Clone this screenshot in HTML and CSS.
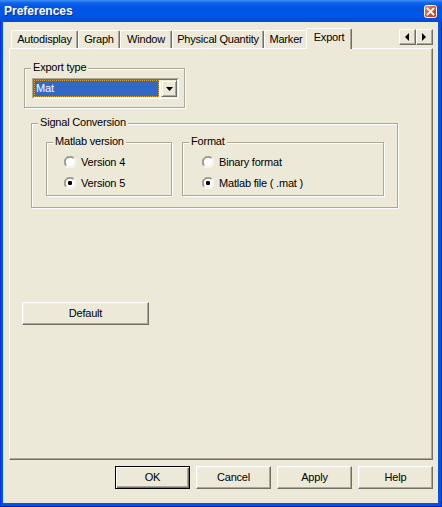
FILE: index.html
```html
<!DOCTYPE html>
<html>
<head>
<meta charset="utf-8">
<title>Preferences</title>
<link rel="stylesheet" href="styles.css">
</head>
<body>
<div class="window">
  <div class="titlebar">
    <span class="title">Preferences</span>
    <span class="close">
      <svg width="13" height="13" viewBox="0 0 13 13">
        <defs>
          <linearGradient id="cg" x1="0" y1="0" x2="1" y2="1">
            <stop offset="0" stop-color="#F0936E"/>
            <stop offset="0.5" stop-color="#E0502C"/>
            <stop offset="1" stop-color="#C03A18"/>
          </linearGradient>
        </defs>
        <rect x="0.5" y="0.5" width="12" height="12" rx="2" fill="url(#cg)" stroke="#fff"/>
        <path d="M3.5 3.5 L9.5 9.5 M9.5 3.5 L3.5 9.5" stroke="#fff" stroke-width="1.8" stroke-linecap="square"/>
      </svg>
    </span>
  </div>
  <div class="client">
    <div class="tabstrip">
      <div class="tabs">
        <div class="tab">Autodisplay</div>
        <div class="tab">Graph</div>
        <div class="tab">Window</div>
        <div class="tab">Physical Quantity</div>
        <div class="tab">Marker</div>
        <div class="tab selected">Export</div>
      </div>
      <div class="scroller">
        <div class="arrow">
          <svg width="5" height="8" viewBox="0 0 5 8"><path d="M4 0 L4 8 L0 4 Z" fill="#000"/></svg>
        </div>
        <div class="arrow">
          <svg width="5" height="8" viewBox="0 0 5 8"><path d="M0 0 L0 8 L4 4 Z" fill="#000"/></svg>
        </div>
      </div>
    </div>
    <div class="panel">
      <div class="group export-group">
        <span class="legend">Export type</span>
        <div class="combo">
          <div class="combo-inner">
            <div class="combo-value"><span class="focus">Mat</span></div>
            <div class="combo-btn">
              <svg width="7" height="4" viewBox="0 0 7 4"><path d="M0 0 L7 0 L3.5 4 Z" fill="#000"/></svg>
            </div>
          </div>
        </div>
      </div>

      <div class="group signal-group">
        <span class="legend">Signal Conversion</span>
        <div class="group sub-group matlab">
          <span class="legend">Matlab version</span>
          <div class="radio-row">
            <svg class="radio" width="12" height="12" viewBox="0 0 12 12">
              <circle cx="6" cy="6" r="5" fill="#fff"/>
              <path d="M10.2 1.8 A5.9 5.9 0 0 0 1.8 10.2" stroke="#ACA899" fill="none"/>
              <path d="M9.5 2.5 A4.9 4.9 0 0 0 2.5 9.5" stroke="#716F64" fill="none"/>
              <path d="M10.2 1.8 A5.9 5.9 0 0 1 1.8 10.2" stroke="#fff" fill="none"/>
              <path d="M9.5 2.5 A4.9 4.9 0 0 1 2.5 9.5" stroke="#F1EFE2" fill="none"/>
            </svg>
            <span>Version 4</span>
          </div>
          <div class="radio-row">
            <svg class="radio" width="12" height="12" viewBox="0 0 12 12">
              <circle cx="6" cy="6" r="5" fill="#fff"/>
              <path d="M10.2 1.8 A5.9 5.9 0 0 0 1.8 10.2" stroke="#ACA899" fill="none"/>
              <path d="M9.5 2.5 A4.9 4.9 0 0 0 2.5 9.5" stroke="#716F64" fill="none"/>
              <path d="M10.2 1.8 A5.9 5.9 0 0 1 1.8 10.2" stroke="#fff" fill="none"/>
              <path d="M9.5 2.5 A4.9 4.9 0 0 1 2.5 9.5" stroke="#F1EFE2" fill="none"/>
              <rect x="4" y="4" width="4" height="4" rx="1.2" fill="#000"/>
            </svg>
            <span>Version 5</span>
          </div>
        </div>
        <div class="group sub-group format">
          <span class="legend">Format</span>
          <div class="radio-row">
            <svg class="radio" width="12" height="12" viewBox="0 0 12 12">
              <circle cx="6" cy="6" r="5" fill="#fff"/>
              <path d="M10.2 1.8 A5.9 5.9 0 0 0 1.8 10.2" stroke="#ACA899" fill="none"/>
              <path d="M9.5 2.5 A4.9 4.9 0 0 0 2.5 9.5" stroke="#716F64" fill="none"/>
              <path d="M10.2 1.8 A5.9 5.9 0 0 1 1.8 10.2" stroke="#fff" fill="none"/>
              <path d="M9.5 2.5 A4.9 4.9 0 0 1 2.5 9.5" stroke="#F1EFE2" fill="none"/>
            </svg>
            <span>Binary format</span>
          </div>
          <div class="radio-row">
            <svg class="radio" width="12" height="12" viewBox="0 0 12 12">
              <circle cx="6" cy="6" r="5" fill="#fff"/>
              <path d="M10.2 1.8 A5.9 5.9 0 0 0 1.8 10.2" stroke="#ACA899" fill="none"/>
              <path d="M9.5 2.5 A4.9 4.9 0 0 0 2.5 9.5" stroke="#716F64" fill="none"/>
              <path d="M10.2 1.8 A5.9 5.9 0 0 1 1.8 10.2" stroke="#fff" fill="none"/>
              <path d="M9.5 2.5 A4.9 4.9 0 0 1 2.5 9.5" stroke="#F1EFE2" fill="none"/>
              <rect x="4" y="4" width="4" height="4" rx="1.2" fill="#000"/>
            </svg>
            <span>Matlab file ( .mat )</span>
          </div>
        </div>
      </div>

      <button class="btn default-btn">Default</button>
    </div>
    <div class="actions">
      <button class="btn btn-default">OK</button>
      <button class="btn">Cancel</button>
      <button class="btn">Apply</button>
      <button class="btn">Help</button>
    </div>
  </div>
</div>
</body>
</html>
```

FILE: styles.css
```css
html, body {
  margin: 0;
  padding: 0;
  background: #ECE9D8;
}

body {
  font-family: "Liberation Sans", Arial, sans-serif;
  font-size: 11px;
  letter-spacing: -0.2px;
  color: #000;
}

.window {
  width: 442px;
  height: 507px;
  display: flex;
  flex-direction: column;
  background: #0054E3;
  box-shadow: inset 1px 0 #0831D9, inset -1px 0 #001EA0, inset 0 -1px #001EA0;
}

.titlebar {
  height: 22px;
  flex: none;
  display: flex;
  align-items: center;
  padding: 0 5px 0 4px;
  background: linear-gradient(to bottom, #3D8FF7 0, #0F62EC 3px, #0054E3 8px, #0056E8 70%, #004AD4 100%);
}

.title {
  flex: 1;
  color: #fff;
  font-weight: bold;
  font-size: 12px;
  letter-spacing: 0;
  text-shadow: 1px 1px 0 #0A2B9E;
}

.close {
  display: flex;
  width: 13px;
  height: 13px;
}

.client {
  flex: 1;
  margin: 0 4px 4px 3px;
  background: #ECE9D8;
  display: flex;
  flex-direction: column;
}

/* Tabs */
.tabstrip {
  height: 26px;
  flex: none;
  display: flex;
  align-items: flex-end;
  padding: 0 5px 0 8px;
}

.tabs {
  display: flex;
  align-items: flex-end;
}

.tab {
  box-sizing: border-box;
  height: 18px;
  border-top: 1px solid #fff;
  border-left: 1px solid #fff;
  border-right: 1px solid #716F64;
  border-radius: 2px 2px 0 0;
  box-shadow: inset -1px 0 #ACA899;
  display: flex;
  align-items: center;
  justify-content: center;
  padding-bottom: 1px;
  white-space: nowrap;
}

.tab:nth-child(1) { width: 67px; }
.tab:nth-child(2) { width: 42px; }
.tab:nth-child(3) { width: 52px; }
.tab:nth-child(4) { width: 92px; }
.tab:nth-child(5) { width: 44px; }

.tab.selected {
  width: 46px;
  height: 21px;
  margin: 0 -2px -1px -2px;
  position: relative;
  z-index: 2;
  background: #ECE9D8;
  padding-bottom: 4px;
}

.scroller {
  margin-left: auto;
  align-self: flex-start;
  margin-top: 7px;
  display: flex;
}

.arrow {
  box-sizing: border-box;
  width: 17px;
  height: 16px;
  display: flex;
  align-items: center;
  justify-content: center;
  border: 1px solid;
  border-color: #fff #716F64 #716F64 #fff;
  box-shadow: inset -1px -1px #ACA899;
}

/* Panel */
.panel {
  box-sizing: border-box;
  height: 412px;
  margin: 0 5px 0 6px;
  border: 1px solid;
  border-color: #fff #716F64 #716F64 #fff;
  box-shadow: inset -1px -1px #ACA899;
  display: flex;
  flex-direction: column;
  align-items: flex-start;
}

.group {
  position: relative;
  box-sizing: border-box;
  border: 1px solid #ACA899;
  box-shadow: inset 1px 1px #fff, 1px 1px #fff;
}

.legend {
  position: absolute;
  top: -8px;
  left: 6px;
  padding: 0 2px;
  line-height: 13px;
  background: #ECE9D8;
  white-space: nowrap;
}

.export-group {
  width: 161px;
  height: 40px;
  margin: 19px 0 0 14px;
  padding: 9px 0 0 7px;
}

.combo {
  box-sizing: border-box;
  width: 147px;
  height: 21px;
  border: 1px solid;
  border-color: #ACA899 #fff #fff #ACA899;
}

.combo-inner {
  box-sizing: border-box;
  height: 100%;
  border: 1px solid;
  border-color: #716F64 #F1EFE2 #F1EFE2 #716F64;
  background: #fff;
  display: flex;
}

.combo-value {
  flex: 1;
  margin-right: 2px;
  background: #316AC5;
  color: #fff;
  display: flex;
  outline: 1px dotted #D9A13A;
  outline-offset: -1px;
}

.focus {
  padding: 2px 0 0 2px;
  line-height: 13px;
}

.combo-btn {
  box-sizing: border-box;
  width: 16px;
  height: 100%;
  background: #ECE9D8;
  border: 1px solid;
  border-color: #ECE9D8 #716F64 #716F64 #ECE9D8;
  box-shadow: inset 1px 1px #fff, inset -1px -1px #ACA899;
  display: flex;
  align-items: center;
  justify-content: center;
}

.signal-group {
  width: 367px;
  height: 85px;
  margin: 15px 0 0 21px;
  padding: 18px 0 0 14px;
  display: flex;
  gap: 10px;
  align-items: flex-start;
}

.sub-group {
  height: 54px;
  padding-top: 8px;
}

.matlab {
  width: 126px;
  padding-left: 17px;
}

.format {
  width: 202px;
  padding-left: 19px;
}

.radio-row {
  height: 21px;
  display: flex;
  align-items: center;
  white-space: nowrap;
}

.radio {
  flex: none;
  margin-right: 5px;
}

/* Buttons */
.btn {
  box-sizing: border-box;
  width: 75px;
  height: 23px;
  margin: 0;
  padding: 0 0 2px 0;
  font-family: "Liberation Sans", Arial, sans-serif;
  font-size: 11px;
  letter-spacing: -0.2px;
  color: #000;
  background: #ECE9D8;
  border: 1px solid;
  border-color: #fff #716F64 #716F64 #fff;
  border-radius: 0;
  box-shadow: inset -1px -1px #ACA899, inset 1px 1px #F1EFE2;
}

.btn-default {
  border: 1px solid #000;
  box-shadow: inset 1px 1px #fff, inset -1px -1px #716F64, inset -2px -2px #ACA899;
}

.default-btn {
  width: 127px;
  margin: 94px 0 0 12px;
}

.actions {
  display: flex;
  justify-content: flex-end;
  gap: 6px;
  margin-top: 6px;
  padding-right: 5px;
}
```
